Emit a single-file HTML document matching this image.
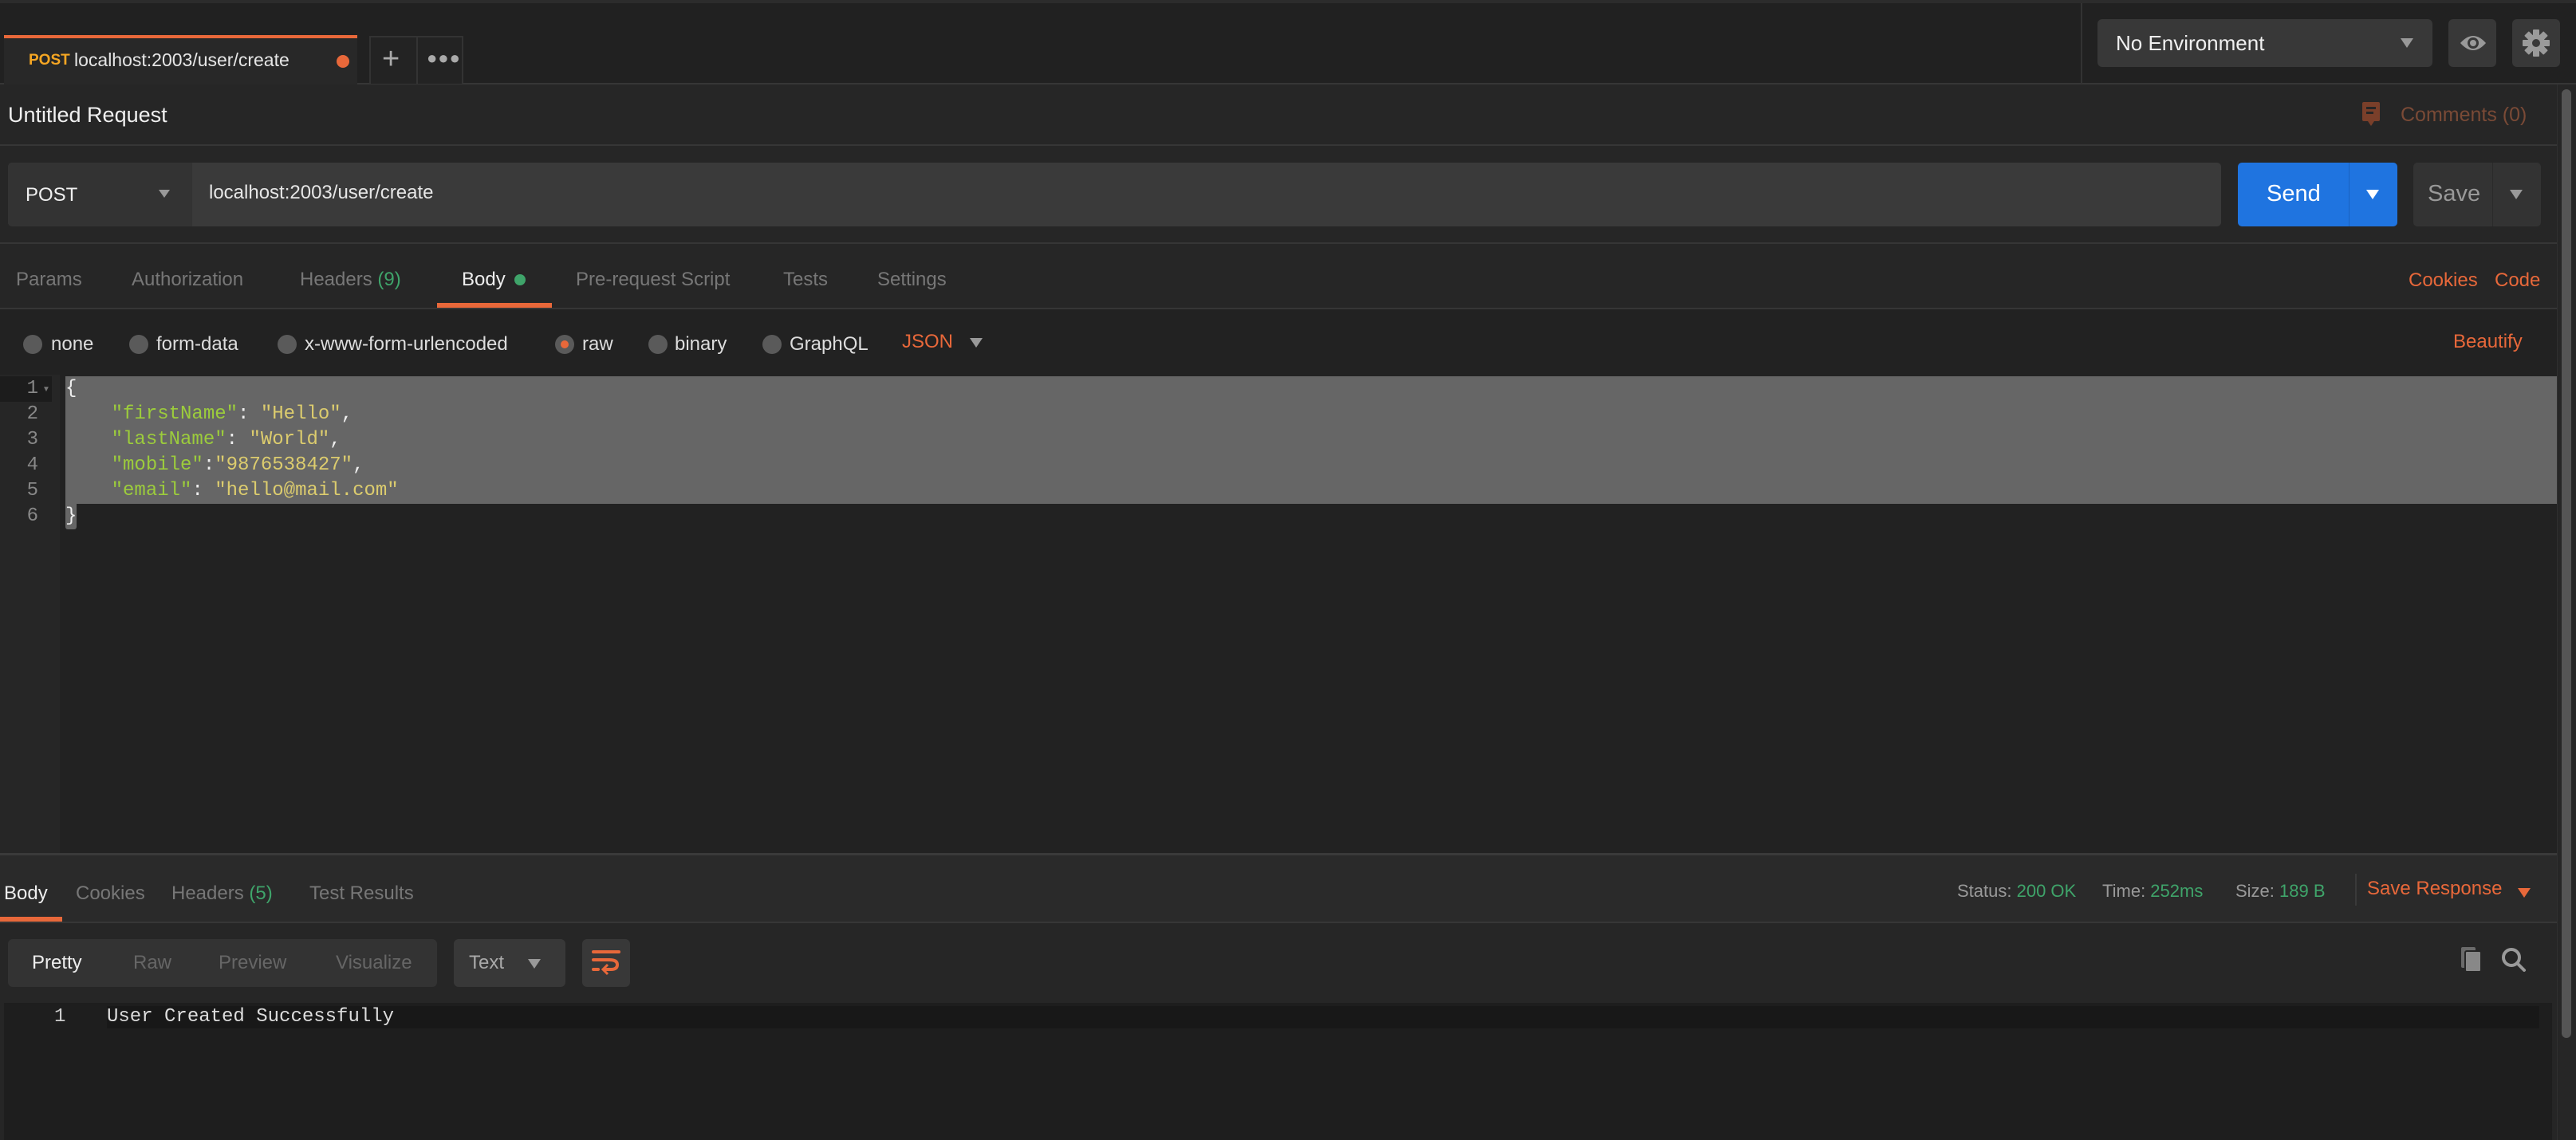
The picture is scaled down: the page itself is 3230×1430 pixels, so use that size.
<!DOCTYPE html>
<html><head><meta charset="utf-8"><style>
*{margin:0;padding:0;box-sizing:border-box}
body{width:3230px;height:1430px;background:#262626;position:relative;overflow:hidden;font-family:"Liberation Sans",sans-serif;color:#ddd}
.a{position:absolute}
.t{position:absolute;white-space:nowrap;line-height:1}
.mono{font-family:"Liberation Mono",monospace}
</style></head><body>
<!-- header -->
<div class="a" style="left:0;top:0;width:3230px;height:105px;background:#212121"></div>
<div class="a" style="left:0;top:0;width:3230px;height:4px;background:#2c2c2c"></div>
<div class="a" style="left:0;top:104px;width:3230px;height:2px;background:#363636"></div>
<!-- tab -->
<div class="a" style="left:5px;top:45px;width:443px;height:61px;background:#282828"></div>
<div class="a" style="left:5px;top:44px;width:443px;height:4px;background:#e8683a"></div>
<div class="t" style="left:36px;top:66px;font-size:19px;color:#f5a623;font-weight:bold">POST</div>
<div class="t" style="left:93px;top:64px;font-size:23px;color:#e6e6e6">localhost:2003/user/create</div>
<div class="a" style="left:422px;top:69px;width:16px;height:16px;border-radius:50%;background:#e8683a"></div>
<div class="a" style="left:463px;top:45px;width:118px;height:60px;border:2px solid #333;border-bottom:none;background:#232323"></div>
<div class="a" style="left:522px;top:45px;width:2px;height:60px;background:#333"></div>
<div class="t" style="left:479px;top:55px;font-size:38px;color:#aaa">+</div>
<div class="t" style="left:535px;top:62px;font-size:22px;color:#aaa;letter-spacing:1px">●●●</div>
<div class="a" style="left:2609px;top:4px;width:2px;height:101px;background:#333"></div>
<div class="a" style="left:2630px;top:24px;width:420px;height:60px;border-radius:6px;background:#383838"></div>
<div class="t" style="left:2653px;top:41px;font-size:26px;color:#f0f0f0">No Environment</div>
<svg class="a" style="left:3010px;top:48px" width="16" height="12" viewBox="0 0 16 12"><path d="M0 0H16L8 12Z" fill="#999"/></svg>
<div class="a" style="left:3070px;top:24px;width:60px;height:60px;border-radius:6px;background:#383838"></div>
<svg class="a" style="left:3084px;top:40px" width="34" height="28" viewBox="0 0 34 28"><path d="M1 14 Q17 -4 33 14 Q17 32 1 14Z" fill="#999"/><circle cx="17" cy="14" r="7" fill="#383838"/><circle cx="17" cy="14" r="4" fill="#999"/></svg>
<div class="a" style="left:3150px;top:24px;width:60px;height:60px;border-radius:6px;background:#383838"></div>
<svg class="a" style="left:3163px;top:37px" width="34" height="34" viewBox="0 0 34 34"><g fill="#9a9a9a"><circle cx="17" cy="17" r="11"/><rect x="13" y="0" width="8" height="34" rx="1"/><rect x="0" y="13" width="34" height="8" rx="1"/><rect x="13" y="0" width="8" height="34" rx="1" transform="rotate(45 17 17)"/><rect x="13" y="0" width="8" height="34" rx="1" transform="rotate(-45 17 17)"/></g><circle cx="17" cy="17" r="5" fill="#383838"/></svg>
<!-- title -->
<div class="t" style="left:10px;top:131px;font-size:27px;color:#f0f0f0">Untitled Request</div>
<svg class="a" style="left:2962px;top:128px" width="22" height="32" viewBox="0 0 22 32"><rect x="0" y="0" width="22" height="24" rx="2" fill="#7a3f2a"/><rect x="5" y="6" width="12" height="3" fill="#262626"/><rect x="5" y="12" width="9" height="3" fill="#262626"/><path d="M7 24 L11 30 L15 24Z" fill="#7a3f2a"/></svg>
<div class="t" style="left:3010px;top:132px;font-size:25px;color:#7a4a36">Comments (0)</div>
<div class="a" style="left:0;top:181px;width:3206px;height:2px;background:#363636"></div>
<!-- url row -->
<div class="a" style="left:10px;top:204px;width:2775px;height:80px;border-radius:5px;background:#3a3a3a"></div>
<div class="a" style="left:10px;top:204px;width:231px;height:80px;border-radius:5px 0 0 5px;background:#333"></div>
<div class="t" style="left:32px;top:233px;font-size:24px;color:#f0f0f0">POST</div>
<svg class="a" style="left:199px;top:238px" width="14" height="10" viewBox="0 0 14 10"><path d="M0 0H14L7 10Z" fill="#999"/></svg>
<div class="t" style="left:262px;top:230px;font-size:24px;color:#e6e6e6">localhost:2003/user/create</div>
<div class="a" style="left:2806px;top:204px;width:200px;height:80px;border-radius:5px;background:#1f74e0"></div>
<div class="a" style="left:2945px;top:204px;width:1px;height:80px;background:#1a62c0"></div>
<div class="t" style="left:2842px;top:229px;font-size:29px;color:#fff">Send</div>
<svg class="a" style="left:2967px;top:238px" width="16" height="12" viewBox="0 0 16 12"><path d="M0 0H16L8 12Z" fill="#fff"/></svg>
<div class="a" style="left:3026px;top:204px;width:160px;height:80px;border-radius:5px;background:#333"></div>
<div class="a" style="left:3125px;top:204px;width:1px;height:80px;background:#2a2a2a"></div>
<div class="t" style="left:3044px;top:229px;font-size:29px;color:#999">Save</div>
<svg class="a" style="left:3147px;top:238px" width="16" height="12" viewBox="0 0 16 12"><path d="M0 0H16L8 12Z" fill="#999"/></svg>
<div class="a" style="left:0;top:304px;width:3206px;height:2px;background:#363636"></div>
<!-- tabs -->
<div class="t" style="left:20px;top:339px;font-size:24px;color:#777">Params</div>
<div class="t" style="left:165px;top:339px;font-size:24px;color:#777">Authorization</div>
<div class="t" style="left:376px;top:339px;font-size:24px;color:#777">Headers <span style="color:#3fa46a">(9)</span></div>
<div class="t" style="left:579px;top:339px;font-size:24px;color:#eee">Body</div>
<div class="a" style="left:645px;top:344px;width:14px;height:14px;border-radius:50%;background:#3fa46a"></div>
<div class="t" style="left:722px;top:339px;font-size:24px;color:#777">Pre-request Script</div>
<div class="t" style="left:982px;top:339px;font-size:24px;color:#777">Tests</div>
<div class="t" style="left:1100px;top:339px;font-size:24px;color:#777">Settings</div>
<div class="a" style="left:548px;top:380px;width:144px;height:6px;background:#e8683a"></div>
<div class="t" style="left:3020px;top:340px;font-size:24px;color:#e8683a">Cookies</div>
<div class="t" style="left:3128px;top:340px;font-size:24px;color:#e8683a">Code</div>
<div class="a" style="left:0;top:386px;width:3206px;height:2px;background:#363636"></div>
<!-- radios -->
<div class="a" style="left:0;top:388px;width:3206px;height:82px;background:#222"></div>
<div class="a" style="left:29px;top:420px;width:24px;height:24px;border-radius:50%;background:#5a5a5a"></div>
<div class="t" style="left:64px;top:420px;font-size:24px;color:#ddd">none</div>
<div class="a" style="left:162px;top:420px;width:24px;height:24px;border-radius:50%;background:#5a5a5a"></div>
<div class="t" style="left:196px;top:420px;font-size:24px;color:#ddd">form-data</div>
<div class="a" style="left:348px;top:420px;width:24px;height:24px;border-radius:50%;background:#5a5a5a"></div>
<div class="t" style="left:382px;top:420px;font-size:24px;color:#ddd">x-www-form-urlencoded</div>
<div class="a" style="left:696px;top:420px;width:24px;height:24px;border-radius:50%;background:#5a5a5a"></div>
<div class="a" style="left:703px;top:427px;width:10px;height:10px;border-radius:50%;background:#e8683a"></div>
<div class="t" style="left:730px;top:420px;font-size:24px;color:#ddd">raw</div>
<div class="a" style="left:813px;top:420px;width:24px;height:24px;border-radius:50%;background:#5a5a5a"></div>
<div class="t" style="left:846px;top:420px;font-size:24px;color:#ddd">binary</div>
<div class="a" style="left:956px;top:420px;width:24px;height:24px;border-radius:50%;background:#5a5a5a"></div>
<div class="t" style="left:990px;top:420px;font-size:24px;color:#ddd">GraphQL</div>
<div class="t" style="left:1131px;top:417px;font-size:24px;color:#e8683a">JSON</div>
<svg class="a" style="left:1216px;top:424px" width="16" height="12" viewBox="0 0 16 12"><path d="M0 0H16L8 12Z" fill="#999"/></svg>
<div class="t" style="left:3076px;top:417px;font-size:24px;color:#e8683a">Beautify</div>
<!-- editor -->
<div class="a" style="left:0;top:470px;width:3206px;height:600px;background:#222"></div>
<div class="a" style="left:0;top:470px;width:75px;height:600px;background:#262626"></div>
<div class="a" style="left:0;top:472px;width:65px;height:32px;background:#1c1c1c"></div>
<div class="a" style="left:82px;top:472px;width:3124px;height:160px;background:#666"></div>
<div class="a" style="left:82px;top:632px;width:14px;height:32px;background:#666;border-radius:0 0 3px 3px"></div>
<div class="mono" style="position:absolute;left:0;top:472px;font-size:24px;line-height:32px;color:#888;width:48px;text-align:right">1<br>2<br>3<br>4<br>5<br>6</div>
<div class="t" style="left:53px;top:484px;font-size:10px;color:#777">▼</div>
<div class="mono" style="position:absolute;left:82px;top:472px;font-size:24px;line-height:32px;color:#eee;white-space:pre">{
    <span style="color:#9ccc3c">"firstName"</span>: <span style="color:#dccc6e">"Hello"</span>,
    <span style="color:#9ccc3c">"lastName"</span>: <span style="color:#dccc6e">"World"</span>,
    <span style="color:#9ccc3c">"mobile"</span>:<span style="color:#dccc6e">"9876538427"</span>,
    <span style="color:#9ccc3c">"email"</span>: <span style="color:#dccc6e">"hello@mail.com"</span>
}</div>
<!-- response -->
<div class="a" style="left:0;top:1070px;width:3206px;height:3px;background:#3a3a3a"></div>
<div class="a" style="left:0;top:1073px;width:3206px;height:84px;background:#2a2a2a"></div>
<div class="t" style="left:5px;top:1109px;font-size:24px;color:#eee">Body</div>
<div class="t" style="left:95px;top:1109px;font-size:24px;color:#777">Cookies</div>
<div class="t" style="left:215px;top:1109px;font-size:24px;color:#777">Headers <span style="color:#3fa46a">(5)</span></div>
<div class="t" style="left:388px;top:1109px;font-size:24px;color:#777">Test Results</div>
<div class="a" style="left:0;top:1150px;width:78px;height:6px;background:#e8683a"></div>
<div class="t" style="left:2454px;top:1107px;font-size:22px;color:#999">Status: <span style="color:#3fa46a">200 OK</span></div>
<div class="t" style="left:2636px;top:1107px;font-size:22px;color:#999">Time: <span style="color:#3fa46a">252ms</span></div>
<div class="t" style="left:2803px;top:1107px;font-size:22px;color:#999">Size: <span style="color:#3fa46a">189 B</span></div>
<div class="a" style="left:2953px;top:1096px;width:2px;height:40px;background:#3a3a3a"></div>
<div class="t" style="left:2968px;top:1103px;font-size:24px;color:#e8683a">Save Response</div>
<svg class="a" style="left:3157px;top:1114px" width="16" height="12" viewBox="0 0 16 12"><path d="M0 0H16L8 12Z" fill="#e8683a"/></svg>
<div class="a" style="left:0;top:1156px;width:3206px;height:2px;background:#363636"></div>
<div class="a" style="left:10px;top:1178px;width:538px;height:60px;border-radius:6px;background:#333"></div>
<div class="t" style="left:40px;top:1196px;font-size:24px;color:#eee">Pretty</div>
<div class="t" style="left:167px;top:1196px;font-size:24px;color:#666">Raw</div>
<div class="t" style="left:274px;top:1196px;font-size:24px;color:#666">Preview</div>
<div class="t" style="left:421px;top:1196px;font-size:24px;color:#666">Visualize</div>
<div class="a" style="left:569px;top:1178px;width:140px;height:60px;border-radius:6px;background:#383838"></div>
<div class="t" style="left:588px;top:1196px;font-size:24px;color:#aaa">Text</div>
<svg class="a" style="left:662px;top:1203px" width="16" height="12" viewBox="0 0 16 12"><path d="M0 0H16L8 12Z" fill="#999"/></svg>
<div class="a" style="left:730px;top:1178px;width:60px;height:60px;border-radius:6px;background:#383838"></div>
<svg class="a" style="left:742px;top:1190px" width="36" height="36" viewBox="0 0 36 36"><path d="M2 4 H34 M2 14 H22 Q32 14 32 20 Q32 26 24 26 H16 M2 26 H8" stroke="#e8683a" stroke-width="4" fill="none" stroke-linecap="round"/><path d="M20 20 L14 26 L20 32" stroke="#e8683a" stroke-width="3" fill="none"/></svg>
<svg class="a" style="left:3086px;top:1188px" width="30" height="32" viewBox="0 0 30 32"><rect x="0" y="0" width="18" height="26" rx="2" fill="#6a6a6a"/><rect x="5" y="5" width="20" height="26" rx="2" fill="#888" stroke="#262626" stroke-width="2"/></svg>
<svg class="a" style="left:3136px;top:1188px" width="32" height="32" viewBox="0 0 32 32"><circle cx="13" cy="13" r="10" stroke="#999" stroke-width="4" fill="none"/><path d="M20 20 L29 29" stroke="#999" stroke-width="4" stroke-linecap="round"/></svg>
<div class="a" style="left:5px;top:1258px;width:3195px;height:172px;background:#1e1e1e"></div>
<div class="a" style="left:134px;top:1262px;width:3050px;height:28px;background:#181818"></div>
<div class="t mono" style="left:68px;top:1264px;font-size:24px;color:#ccc">1</div>
<div class="t mono" style="left:134px;top:1264px;font-size:24px;color:#ddd">User Created Successfully</div>
<!-- scrollbar -->
<div class="a" style="left:3206px;top:106px;width:24px;height:1324px;background:#262626;border-left:1px solid #303030"></div>
<div class="a" style="left:3212px;top:112px;width:12px;height:1190px;border-radius:6px;background:#555"></div>
</body></html>
